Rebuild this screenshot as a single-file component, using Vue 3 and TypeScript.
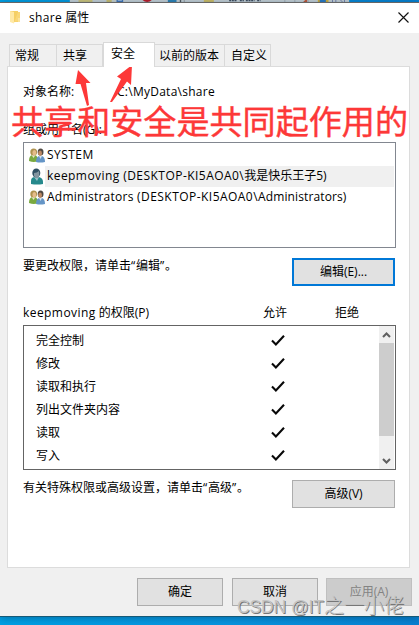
<script setup lang="ts">
import { ref } from 'vue'

interface Principal {
  id: string
  account: string
  host?: string
  member?: string
  kind: 'group' | 'user'
}

const tabs = [
  { label: '常规', cls: 'general' },
  { label: '共享', cls: 'sharing' },
  { label: '安全', cls: 'security' },
  { label: '以前的版本', cls: 'versions' },
  { label: '自定义', cls: 'custom' },
]
const activeTab = ref('安全')

const principals: Principal[] = [
  { id: 'system', account: 'SYSTEM', kind: 'group' },
  { id: 'keep', account: 'keepmoving ', host: '(DESKTOP-KI5AOA0\\', member: '我是快乐王子5)', kind: 'user' },
  { id: 'admins', account: 'Administrators ', host: '(DESKTOP-KI5AOA0\\', member: 'Administrators)', kind: 'group' },
]
const selected = ref('keep')

const permissions = ['完全控制', '修改', '读取和执行', '列出文件夹内容', '读取', '写入']
</script>

<template>
  <div class="desktop">
    <svg class="backdrop" width="419" height="3" viewBox="0 0 419 3">
      <rect width="419" height="3" fill="#d3d5d6" />
      <rect x="13" width="21" height="3" fill="#dcc977" />
      <rect x="55" width="8" height="3" fill="#d8c16b" />
      <rect x="63" width="7" height="3" fill="#d6d6ce" />
      <rect x="70" width="10" height="3" fill="#4774b5" />
      <rect x="72" width="6" height="1" fill="#c3d6ee" />
      <path d="M109 0h14q-3 3-7 3t-7-3z" fill="#c9151e" />
      <rect x="147" width="13" height="3" fill="#3183b5" />
      <rect x="165" width="2" height="3" fill="#555" />
      <rect x="171" width="1" height="3" fill="#888" />
      <rect x="201" width="15" height="3" fill="#dcc15e" />
      <path d="M239 1h12M255 1h6M264 1h13M281 1h5" stroke="#444b59" stroke-width="2" stroke-dasharray="3 1" />
      <path d="M322.500 0v3M337.500 0v3M357.500 0v3" stroke="#9ba0a5" />
      <path d="M350 3l3-3h3v3z" fill="#cf542d" />
      <rect x="372" width="16" height="3" fill="#e0b331" />
      <rect x="375" width="9" height="3" fill="#2d7ac3" />
      <path d="M394 0v3M399 0v3M406 0l3 3M412 0v3" stroke="#565a95" />
    </svg>

    <section class="dialog">
      <header class="titlebar">
        <svg class="folder" width="11" height="14" viewBox="0 0 11 14">
          <path d="M0 1h8v11H0z" fill="#f5cf65" />
          <path d="M0 1l4 1v11.500L0 12z" fill="#ffe9a6" />
          <path d="M8 2h2v9.500H4V13z" fill="#f9d778" />
          <path d="M8 8h2v4H8z" fill="#fbe39c" />
        </svg>
        <h1><span class="t-share">share</span> 属性</h1>
        <svg class="close" width="11" height="11" viewBox="0 0 11 11">
          <path d="M.5.5l10 10M10.500.5l-10 10" stroke="#111" stroke-width="1.150" fill="none" />
        </svg>
      </header>

      <nav class="tabs">
        <button
          v-for="tab in tabs"
          :key="tab.label"
          :class="['tab', tab.cls, { active: tab.label === activeTab }]"
          @click="activeTab = tab.label"
        >{{ tab.label }}</button>
      </nav>

      <main class="panel">
        <div class="object-row"><span class="caption">对象名称:</span><span class="path">C:\MyData\share</span></div>
        <div class="group-label">组或用户名(G):</div>

        <ul class="principals">
          <li
            v-for="p in principals"
            :key="p.id"
            :class="[p.id, { selected: p.id === selected }]"
            @click="selected = p.id"
          >
            <svg v-if="p.kind === 'group'" class="avatar" width="16" height="15" viewBox="0 0 16 15">
              <path d="M0 13q0-5 3-6h3q3 1 3 6-4 2-9 0z" fill="#79a940" />
              <path d="M2.500 7l2 3 2-3z" fill="#e5e8ca" />
              <ellipse cx="4.700" cy="4" rx="3.400" ry="3.600" fill="#ae924f" />
              <ellipse cx="5.300" cy="4.800" rx="1.900" ry="2.700" fill="#e5bc8a" />
              <path d="M7 14q0-5 3-6h3q3 1 3 6-5 1-9 0z" fill="#6595c6" />
              <path d="M10 8l1.500 3L13 8z" fill="#d5e3ee" />
              <ellipse cx="11.600" cy="4" rx="2.900" ry="3.500" fill="#4f4943" />
              <ellipse cx="11.100" cy="5.300" rx="1.900" ry="2.700" fill="#bd8863" />
            </svg>
            <svg v-else class="avatar" width="16" height="17" viewBox="0 0 16 17">
              <path d="M2 16V13q0-4 4-4h4q4 1 4 5v2q-6 1-12 0z" fill="#26898c" />
              <path d="M5 9l3 4 2-4z" fill="#9ac3ca" />
              <ellipse cx="7.300" cy="5" rx="4" ry="4.500" fill="#304f62" />
              <path d="M5 5q3 0 5-2 1 5-1 7-2 1-4-2z" fill="#8395a0" />
            </svg>
            <span class="principal-name"><span class="account">{{ p.account }}</span><span v-if="p.host" class="host">{{ p.host }}</span><span v-if="p.member" class="member">{{ p.member }}</span></span>
          </li>
        </ul>

        <div class="hint-row edit-row">
          <p>要更改权限，请单击<span class="q">“</span>编辑<span class="q">”</span>。</p>
          <button class="btn focused">编辑(E)...</button>
        </div>

        <div class="perm-head">
          <span><span class="t-keep">keepmoving</span> 的权限(P)</span>
          <span>允许</span>
          <span>拒绝</span>
        </div>

        <div class="perm-box">
          <ul class="perms">
            <li v-for="name in permissions" :key="name">
              <span>{{ name }}</span>
              <svg width="14" height="12" viewBox="0 0 14 12">
                <path d="M1 5.500l3.900 4L13 .8" fill="none" stroke="#080808" stroke-width="2.100" />
              </svg>
            </li>
          </ul>
          <div class="scrollbar">
            <svg width="15" height="17" viewBox="0 0 15 17">
              <path d="M4 11l3.500-3.500L11 11" fill="none" stroke="#606060" stroke-width="2.100" />
            </svg>
            <div class="thumb"></div>
            <svg class="down" width="15" height="17" viewBox="0 0 15 17">
              <path d="M4 7l3.500 3.500L11 7" fill="none" stroke="#606060" stroke-width="2.100" />
            </svg>
          </div>
        </div>

        <div class="hint-row advanced-row">
          <p>有关特殊权限或高级设置，请单击<span class="q">“</span>高级<span class="q">”</span>。</p>
          <button class="btn">高级(V)</button>
        </div>
      </main>

      <footer class="actions">
        <button class="btn">确定</button>
        <button class="btn">取消</button>
        <button class="btn disabled" disabled>应用(A)</button>
      </footer>
    </section>

    <svg class="annotation" width="419" height="150" viewBox="0 0 419 150">
      <path d="M78 70L90.500 83l-4.500 0 3 22-2 1-6.500-22-5 0z" fill="#fd3838" />
      <path d="M132 65L131 85l-4-3.500L112 102l-2 0L121 79l-4-2.500z" fill="#fd3838" />
      <text x="11" y="134" textLength="397" lengthAdjust="spacingAndGlyphs">共享和安全是共同起作用的</text>
    </svg>
    <svg class="watermark" width="180" height="30" viewBox="0 0 180 30">
      <text x="2" y="20.500" textLength="87" lengthAdjust="spacingAndGlyphs">CSDN @IT</text>
      <text class="cjk" x="89" y="21" textLength="80" lengthAdjust="spacingAndGlyphs">之一小佬</text>
    </svg>
  </div>
</template>

<style>
body {
  margin: 0;
  overflow: hidden;
}
</style>

<style scoped>
.desktop {
  position: relative;
  width: 419px;
  height: 625px;
  overflow: hidden;
  display: flex;
  flex-direction: column;
  background: linear-gradient(90deg, #00a0e4, #0894df 55%, #0780d1);
  font-family: "Open Sans", "Noto Sans CJK SC", sans-serif;
  font-size: 12px;
  line-height: 16px;
  color: #000;
}
.desktop * { box-sizing: border-box; }
.backdrop { display: block; flex: none; height: 2px; }
.dialog {
  height: 615px;
  flex: none;
  display: flex;
  flex-direction: column;
  background: #f0f0f0;
  border-top: 1px solid #666;
  border-bottom: 1px solid #165977;
  box-shadow: 0 1px 8px #00436d88;
}
.titlebar {
  height: 30px;
  flex: none;
  display: flex;
  align-items: center;
  padding: 0 10px 2px 10px;
  background: #fff;
}
h1 { margin: 2px 0 0 8px; font-size: 12px; font-weight: 400; white-space: pre; }
.t-share { letter-spacing: .35px; }
.close { margin-left: auto; }
.tabs {
  height: 33px;
  flex: none;
  display: flex;
  align-items: flex-end;
  padding-left: 9px;
}
.tab {
  height: 22px;
  margin: 0;
  padding: 0 0 0 5px;
  text-align: left;
  background: #f0f0f0;
  border: 1px solid #d9d9d9;
  border-bottom: 0;
  font: inherit;
  white-space: nowrap;
  color: #000;
}
.tab + .tab { border-left: 0; }
.general { width: 48px; }
.sharing { width: 46px; padding-left: 6px; }
.tab.active {
  width: 52px;
  height: 25px;
  margin-bottom: -1px;
  padding-left: 7px;
  padding-bottom: 2px;
  border-left: 1px solid #d9d9d9;
  background: #fff;
  z-index: 1;
}
.versions { width: 70px; padding-left: 4px; }
.custom { width: 46px; padding-left: 6px; }
.panel {
  width: 403px;
  height: 502px;
  flex: none;
  margin-left: 7px;
  padding: 17px 14px 0 15px;
  background: #fff;
  border: 1px solid #dcdcdc;
  display: flex;
  flex-direction: column;
}
.object-row { display: flex; flex: none; height: 16px; }
.caption { width: 94px; }
.path { letter-spacing: .26px; }
.group-label { height: 16px; margin-top: 22px; flex: none; }
ul { list-style: none; margin: 0; padding: 0; }
.principals {
  width: 373px;
  height: 106px;
  flex: none;
  margin-top: 4px;
  padding: 2px 1px 0 5px;
  border: 1px solid #828790;
}
.principals li { height: 21px; display: flex; align-items: center; }
.avatar { width: 16px; flex: none; }
.principal-name { height: 21px; line-height: 20px; flex: 1; padding-left: 2px; white-space: pre; }
.system .account, .host { letter-spacing: .46px; }
.keep .account { letter-spacing: .43px; }
.admins .account { letter-spacing: .25px; }
.admins .member { letter-spacing: .12px; }
.selected .principal-name { background: #f0f0f0; }
.hint-row { display: flex; justify-content: space-between; width: 372px; flex: none; height: 28px; }
.hint-row p { margin: 0; white-space: nowrap; }
.q { display: inline-block; width: 5px; }
.edit-row { margin-top: 10px; }
.btn {
  width: 103px;
  height: 28px;
  padding: 0;
  border: 1px solid #adadad;
  background: #e1e1e1;
  font: inherit;
  color: #000;
}
.focused { border: 2px solid #0078d7; }
.perm-head {
  display: grid;
  grid-template-columns: 240px 72px 1fr;
  height: 16px;
  margin-top: 19px;
  flex: none;
}
.t-keep { letter-spacing: .43px; }
.perm-box {
  width: 373px;
  height: 145px;
  flex: none;
  margin-top: 4px;
  border: 1px solid #646464;
  display: flex;
}
.perms { flex: 1; padding: 3px 0 0 12px; }
.perms li { height: 23px; display: grid; grid-template-columns: 235px 14px; align-items: center; }
.scrollbar { width: 16px; padding-right: 1px; background: linear-gradient(90deg, #f0f0f0 15px, #fff 15px); }
.scrollbar svg { display: block; }
.thumb { width: 15px; height: 93px; background: #cdcdcd; }
.scrollbar .down { margin-top: 16px; }
.advanced-row { margin-top: 10px; }
.actions { display: flex; gap: 9px; margin: 10px 0 0 137px; }
.actions .btn { width: 86px; }
.actions .btn:last-child { margin-left: -1px; }
.actions .btn.disabled { background: #ccc; border-color: #bfbfbf; color: #838383; }
.annotation { position: absolute; left: 0; top: 0; pointer-events: none; }
.annotation text {
  font: 400 33px "Noto Sans CJK SC", sans-serif;
  fill: #fd3838;
  stroke: #fd3838;
  stroke-width: .4px;
}
.watermark { position: absolute; left: 235px; top: 592px; pointer-events: none; }
.watermark text {
  font: 400 18px "Liberation Sans", sans-serif;
  fill: #c4c4c4;
  text-shadow: 1px 1px 0 #777;
}
.watermark .cjk { font: 300 20px "Noto Sans CJK SC", sans-serif; }
</style>
